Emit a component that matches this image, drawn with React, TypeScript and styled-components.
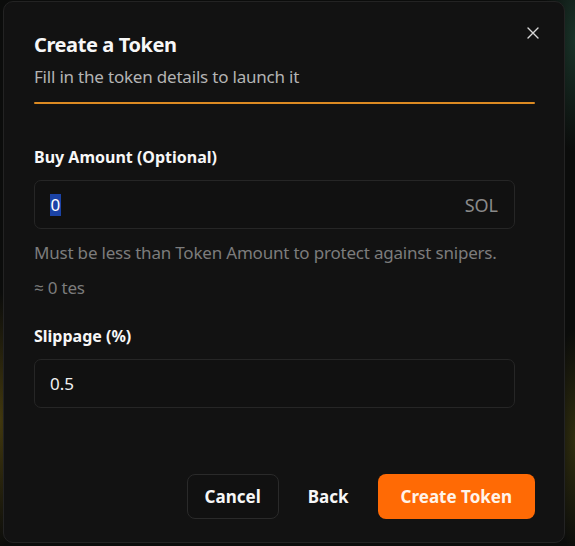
import React from "react";
import styled, { createGlobalStyle } from "styled-components";

const Global = createGlobalStyle`
  html, body { margin: 0; padding: 0; background: #0a0a0a; }
  body { font-family: "Noto Sans", "Open Sans", sans-serif; }
  * { box-sizing: border-box; }
`;

const Page = styled.div`
  width: 575px;
  height: 546px;
  padding: 1px 10px 3px 3px;
  background:
    radial-gradient(ellipse 30px 160px at 0px 420px, rgba(170, 140, 20, 0.35), transparent 80%),
    radial-gradient(ellipse 40px 140px at 575px 40px, rgba(40, 90, 70, 0.5), transparent 80%),
    radial-gradient(ellipse 30px 140px at 575px 440px, rgba(120, 110, 20, 0.35), transparent 80%),
    #0b0c0b;
  overflow: hidden;
`;

const Dialog = styled.div`
  position: relative;
  width: 562px;
  height: 542px;
  background: #121212;
  border: 1px solid #232323;
  border-radius: 10px;
  padding: 29px 29px 0 30px;
  display: flex;
  flex-direction: column;
  color: #f5f5f5;
`;

const Close = styled.button`
  position: absolute;
  top: 22px;
  right: 22px;
  width: 18px;
  height: 18px;
  padding: 0;
  border: none;
  background: transparent;
  color: #d8d8d8;
  display: flex;
  align-items: center;
  justify-content: center;
`;

const Title = styled.h2`
  margin: 0;
  font-size: 20px;
  line-height: 28px;
  font-weight: 700;
  letter-spacing: -0.4px;
  color: #f7f7f7;
`;

const Subtitle = styled.p`
  margin: 6px 0 0;
  font-size: 17px;
  line-height: 24px;
  color: #b4b4b4;
  letter-spacing: -0.2px;
`;

const Divider = styled.div`
  margin-top: 13px;
  height: 2px;
  background: #dc8a22;
  border-radius: 1px;
`;

const Label = styled.div<{ $mt: number }>`
  margin-top: ${(p) => p.$mt}px;
  font-size: 16px;
  line-height: 24px;
  font-weight: 700;
  color: #f7f7f7;
`;

const Field = styled.div`
  margin-top: 11px;
  width: 481px;
  height: 49px;
  border: 1px solid #262626;
  border-radius: 7px;
  background: #111111;
  display: flex;
  align-items: center;
  justify-content: space-between;
  padding: 0 16px 0 15px;
  font-size: 18px;
`;

const Value = styled.span`
  color: #f2f2f2;
  font-size: 17px;
`;

const Selected = styled.span`
  display: inline-block;
  background: #1b43a6;
  color: #ffffff;
  line-height: 22px;
  padding: 0 0.5px;
`;

const Suffix = styled.span`
  color: #8a8a8a;
  font-size: 18px;
`;

const Hint = styled.div<{ $mt: number }>`
  margin-top: ${(p) => p.$mt}px;
  font-size: 17px;
  line-height: 24px;
  color: #7c7c7c;
  letter-spacing: -0.2px;
`;

const Actions = styled.div`
  margin-top: 66px;
  display: flex;
  justify-content: flex-end;
  gap: 16px;
`;

const Button = styled.button<{ $variant: "outline" | "ghost" | "primary" }>`
  height: 45px;
  border-radius: 8px;
  font-family: inherit;
  font-size: 17px;
  font-weight: 700;
  padding: 0 ${(p) => (p.$variant === "ghost" ? 12 : p.$variant === "primary" ? 22 : 17)}px;
  color: ${(p) => (p.$variant === "primary" ? "#fff4ea" : "#f7f7f7")};
  background: ${(p) =>
    p.$variant === "primary" ? "#ff6a05" : p.$variant === "outline" ? "#111111" : "transparent"};
  border: 1px solid ${(p) => (p.$variant === "outline" ? "#2a2a2a" : "transparent")};
`;

export default function App() {
  return (
    <>
      <Global />
      <Page>
        <Dialog>
          <Close aria-label="Close">
            <svg width="12" height="12" viewBox="0 0 12 12" fill="none">
              <path d="M1 1L11 11M11 1L1 11" stroke="currentColor" strokeWidth="1.4" strokeLinecap="round" />
            </svg>
          </Close>
          <Title>Create a Token</Title>
          <Subtitle>Fill in the token details to launch it</Subtitle>
          <Divider />
          <Label $mt={41}>Buy Amount (Optional)</Label>
          <Field>
            <Value>
              <Selected>0</Selected>
            </Value>
            <Suffix>SOL</Suffix>
          </Field>
          <Hint $mt={12}>Must be less than Token Amount to protect against snipers.</Hint>
          <Hint $mt={11}>≈ 0 tes</Hint>
          <Label $mt={24}>Slippage (%)</Label>
          <Field>
            <Value>0.5</Value>
          </Field>
          <Actions>
            <Button $variant="outline">Cancel</Button>
            <Button $variant="ghost">Back</Button>
            <Button $variant="primary">Create Token</Button>
          </Actions>
        </Dialog>
      </Page>
    </>
  );
}
